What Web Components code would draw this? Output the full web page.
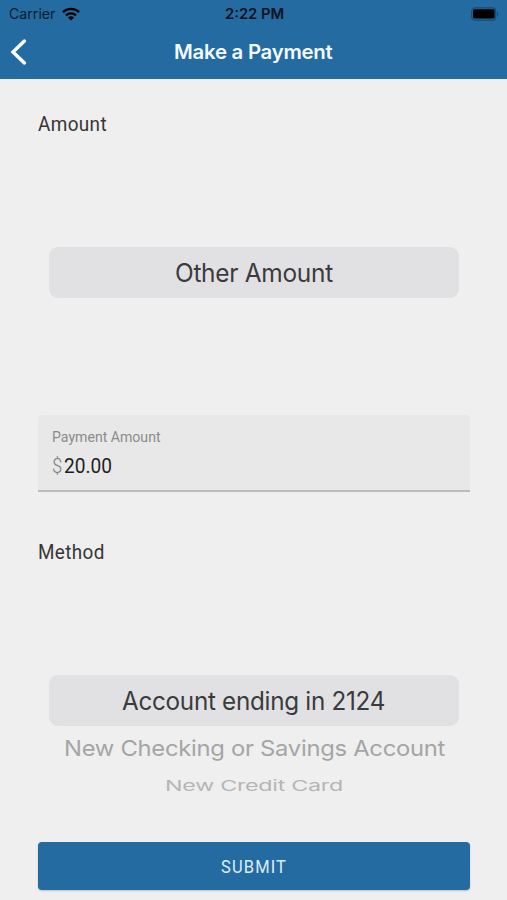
<!DOCTYPE html>
<html lang="en">
<head>
<meta charset="utf-8">
<title>Make a Payment</title>
<style>
html,body{margin:0;height:100%;overflow:hidden;background:#efefef}
</style>
</head>
<body>
<payment-screen></payment-screen>
<script>
const define = (name, html, ready) => {
  const template = document.createElement('template');
  template.innerHTML = html;
  customElements.define(name, class extends HTMLElement {
    constructor() {
      super();
      this.attachShadow({mode: 'open'}).append(template.content.cloneNode(true));
    }
    connectedCallback() { if (ready) ready(this, this.shadowRoot); }
  });
};

// A single line of text stretched to a given width, with an optional vertical squash.
define('fit-text', `
<style>
:host{display:block;flex:none;white-space:nowrap}
span{display:inline-block;transform-origin:0 50%}
</style><span><slot></slot></span>`, (host, root) => {
  const span = root.querySelector('span');
  const width = +host.getAttribute('width');
  host.style.width = width + 'px';
  span.style.transform = `scale(${width / span.offsetWidth}, ${host.getAttribute('squash') || 1})`;
});

define('status-bar', `
<style>
:host{display:grid;grid-template-columns:1fr auto 1fr;align-items:center;height:27px;padding:0 8px 0 9px;color:#071c2b;font:400 14px/27px Inter,sans-serif}
.left{display:flex;align-items:center;gap:6.5px}
.time{font-weight:600;color:#04121d}
svg{display:block}
.battery{justify-self:end}
</style>
<div class="left"><fit-text width="46.5">Carrier</fit-text>
<svg width="18" height="14" viewBox="0 0 18 14"><g fill="none" stroke="#000" stroke-width="2.3"><path d="M.9 5.1A11.6 11.6 0 0 1 17.1 5.1"/><path d="M3.9 8.4A7.3 7.3 0 0 1 14.1 8.4"/></g><path d="M9 13.6 5.9 10.5A4.4 4.4 0 0 1 12.1 10.5Z"/></svg></div>
<fit-text class="time" width="59">2:22 PM</fit-text>
<svg class="battery" width="28" height="14" viewBox="0 0 28 14"><rect x=".7" y=".9" width="24" height="12.2" rx="3.2" fill="none" stroke="#174a70" stroke-width="1.1"/><rect x="2" y="2.3" width="21.6" height="9.2" rx="1.5"/><path d="M26 4.8q1.4.7 1.4 2.2T26 9.2z" fill="#174a70"/></svg>`);

define('nav-bar', `
<style>
:host{display:grid;grid-template-columns:1fr auto 1fr;align-items:center;height:50px;padding:0 10px 2px;color:#f4faff;font:600 20px/28px Inter,sans-serif;letter-spacing:-.25px}
svg{display:block}
</style>
<svg width="17" height="26" viewBox="0 0 17 26"><path d="M14.4 2.1 3 13 14.4 23.9" fill="none" stroke="#fff" stroke-width="3.4" stroke-linecap="round" stroke-linejoin="miter"/></svg>
<fit-text width="159"><slot></slot></fit-text><span></span>`);

define('section-label', `
<style>:host{display:block;height:24px;color:#363636;font:400 20px/24px Roboto,sans-serif;letter-spacing:.4px}</style><slot></slot>`);

define('wheel-picker', `
<style>
:host{display:flex;flex-direction:column;align-items:center;color:#a5a5a6;font:400 25px/30px Inter,sans-serif;letter-spacing:-.3px}
.selected{display:flex;box-sizing:border-box;align-items:center;justify-content:center;align-self:stretch;margin:0 11px 0 10.5px;height:50.5px;padding-top:2px;border-radius:9px;background:#e1e1e3;color:#3b3b3d}
</style>
<div class="selected"><slot name="selected"></slot></div><slot></slot>`);

define('amount-field', `
<style>
:host{display:block;box-sizing:border-box;height:77px;padding:12px 14px 0;border-radius:4px 4px 0 0;background:#e8e8e8;border-bottom:2px solid #bcbcbc;font-family:Roboto,sans-serif}
.label{font-size:15px;line-height:20px;color:#8b8b8b}
.value{display:flex;gap:1px;margin-top:8px;font-size:19.5px;line-height:24px;color:#1e1e1e}
.cur{color:#7d7d7d;font-weight:300}
</style>
<fit-text class="label" width="109">Payment Amount</fit-text>
<div class="value"><fit-text class="cur" width="10.5">$</fit-text><fit-text width="48">20.00</fit-text></div>`);

define('submit-button', `
<style>
:host{display:flex;box-sizing:border-box;align-items:center;justify-content:center;height:48px;padding-top:2px;border-radius:4px;background:#246ba1;color:#d9edfa;box-shadow:0 1px 2px #0003;font:400 17.5px/24px Roboto,sans-serif;letter-spacing:1.2px}
</style><fit-text width="66"><slot></slot></fit-text>`);

define('payment-screen', `
<style>
:host{display:block;height:900px;background:#efefef}
header{height:79px;background:#246ba1}
main{padding:33px 37px 0 38px}
.amount{margin-top:111px}
amount-field{margin-top:117px;margin-bottom:48.5px}
.method{margin-top:111px;height:166.5px}
.near{margin-top:7px}
.far{margin-top:8px;color:#b5b5b6}
</style>
<header><status-bar></status-bar><nav-bar>Make a Payment</nav-bar></header>
<main>
<section-label><fit-text width="69">Amount</fit-text></section-label>
<wheel-picker class="amount"><fit-text slot="selected" width="157.5">Other Amount</fit-text></wheel-picker>
<amount-field></amount-field>
<section-label><fit-text width="67">Method</fit-text></section-label>
<wheel-picker class="method"><fit-text slot="selected" width="263">Account ending in 2124</fit-text>
<fit-text class="near" width="381" squash=".88">New Checking or Savings Account</fit-text>
<fit-text class="far" width="178" squash=".6">New Credit Card</fit-text></wheel-picker>
<submit-button>SUBMIT</submit-button>
</main>`);
</script>
</body>
</html>
